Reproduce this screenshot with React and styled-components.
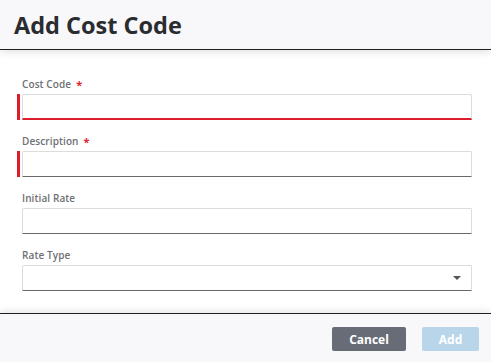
import React from "react";
import styled, { createGlobalStyle } from "styled-components";

const GlobalStyle = createGlobalStyle`
  html, body {
    margin: 0;
    padding: 0;
    background: #ffffff;
    font-family: 'Open Sans', 'Noto Sans', sans-serif;
  }
  * { box-sizing: border-box; }
`;

const Modal = styled.div`
  display: flex;
  flex-direction: column;
  width: 491px;
  height: 362px;
  overflow: hidden;
`;

const Header = styled.header`
  position: relative;
  z-index: 2;
  height: 50px;
  display: flex;
  align-items: center;
  padding: 1px 14px 0;
  background: #f8f8fa;
  border-bottom: 1px solid #1f1f22;
  box-shadow: 0 2px 8px rgba(0, 0, 0, 0.12);
`;

const Title = styled.h1`
  margin: 0;
  font-size: 23.5px;
  line-height: 30px;
  font-weight: 700;
  color: #2a2c30;
`;

const Body = styled.div`
  flex: 1;
  display: flex;
  flex-direction: column;
  gap: 14px;
  padding: 27px 19px 0 22px;
`;

const Field = styled.div`
  display: flex;
  flex-direction: column;
  gap: 3px;
`;

const Label = styled.label`
  display: flex;
  align-items: center;
  height: 14px;
  font-size: 10px;
  line-height: 14px;
  font-weight: 600;
  color: #6e7074;
  letter-spacing: 0.1px;
`;

const Star = styled.span`
  color: #dc2430;
  margin-left: 5px;
  font-size: 11px;
  font-weight: 700;
  line-height: 1;
`;

const InputWrap = styled.div`
  position: relative;
  height: 26px;
  border: 1px solid #dcdcdc;
  border-bottom: ${(p) => (p.$error ? "2px solid #dc1e2c" : "1px solid #6a6a6a")};
  border-radius: 2px 2px 0 0;
  background: #fff;

  &::before {
    content: "";
    display: ${(p) => (p.$required ? "block" : "none")};
    position: absolute;
    left: -6px;
    top: -1px;
    bottom: ${(p) => (p.$error ? "-2px" : "-1px")};
    width: 3px;
    background: #dc1e2c;
  }
`;

const Caret = styled.span`
  position: absolute;
  right: 10px;
  top: 10px;
  width: 0;
  height: 0;
  border-left: 4px solid transparent;
  border-right: 4px solid transparent;
  border-top: 4px solid #555;
`;

const Footer = styled.footer`
  position: relative;
  z-index: 2;
  height: 49px;
  display: flex;
  justify-content: flex-end;
  align-items: flex-start;
  gap: 16px;
  padding: 13px 12px 0 0;
  background: #f8f8fa;
  border-top: 1px solid #1f1f22;
  box-shadow: 0 -2px 8px rgba(0, 0, 0, 0.1);
`;

const Button = styled.button`
  height: 24px;
  width: ${(p) => p.$w}px;
  border: none;
  border-radius: 2px;
  background: ${(p) => p.$bg};
  color: #fff;
  font-family: 'Open Sans', 'Noto Sans', sans-serif;
  font-size: 12px;
  font-weight: 700;
  padding: 0;
`;

const fields = [
  { label: "Cost Code", required: true, error: true },
  { label: "Description", required: true },
  { label: "Initial Rate" },
  { label: "Rate Type", select: true },
];

export default function App() {
  return (
    <>
      <GlobalStyle />
      <Modal>
        <Header>
          <Title>Add Cost Code</Title>
        </Header>
        <Body>
          {fields.map((f) => (
            <Field key={f.label}>
              <Label>
                {f.label}
                {f.required && <Star>*</Star>}
              </Label>
              <InputWrap $required={f.required} $error={f.error}>
                {f.select && <Caret />}
              </InputWrap>
            </Field>
          ))}
        </Body>
        <Footer>
          <Button $w={74} $bg="#686c77">Cancel</Button>
          <Button $w={57} $bg="#b9d5ea">Add</Button>
        </Footer>
      </Modal>
    </>
  );
}
